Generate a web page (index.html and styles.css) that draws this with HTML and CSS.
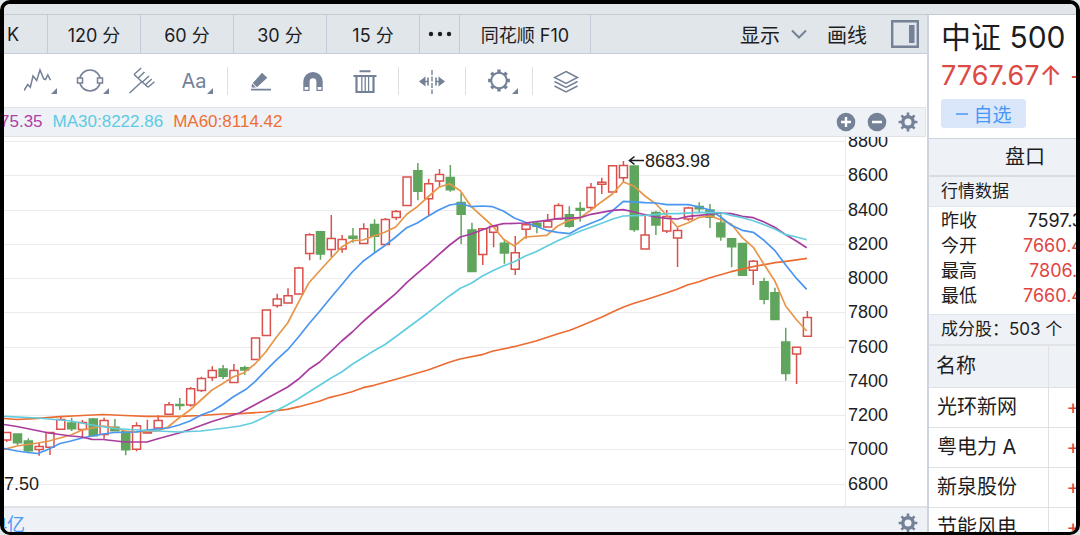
FILE: index.html
```
<!DOCTYPE html>
<html lang="zh-Hans">
<head>
  <meta charset="UTF-8">
  <meta name="viewport" content="width=device-width, initial-scale=1">
  <title>中证 500</title>
  <link rel="stylesheet" href="styles.css">
</head>
<body>

  <!-- 共用图标 -->
  <svg class="symbols" aria-hidden="true">
    <symbol id="gear" viewBox="0 0 20 20">
      <circle cx="10" cy="10" r="5.2" fill="none" stroke="currentColor" stroke-width="3.4"/>
      <path fill="none" stroke="currentColor" stroke-width="2.6" d="M10 .6v4M10 15.4v4M.6 10h4M15.4 10h4M3.4 3.4l2.8 2.8M13.8 13.8l2.8 2.8M3.4 16.6l2.8-2.8M13.8 6.2l2.8-2.8"/>
    </symbol>
  </svg>

  <div class="app">
    <div class="title-strip"></div>

    <div class="layout">
      <main class="main">

        <!-- 周期切换 -->
        <nav class="period-bar">
          <button class="period period-first">K</button>
          <button class="period">120 分</button>
          <button class="period">60 分</button>
          <button class="period">30 分</button>
          <button class="period">15 分</button>
          <button class="period period-more" aria-label="更多">
            <svg width="24" height="6" viewBox="0 0 24 6"><g fill="currentColor"><circle cx="3" cy="3" r="2.2"/><circle cx="12" cy="3" r="2.2"/><circle cx="21" cy="3" r="2.2"/></g></svg>
          </button>
          <button class="period period-wide">同花顺 F10</button>
          <div class="view-options">
            <button class="option">显示
              <svg width="16" height="10" viewBox="0 0 16 10"><path d="M1 1.5L8 8.5L15 1.5" fill="none" stroke="#748197" stroke-width="2"/></svg>
            </button>
            <button class="option">画线</button>
            <button class="option" aria-label="侧栏">
              <svg width="28" height="28" viewBox="0 0 28 28"><path d="M1.2 1.2h25.6v25.6H1.2z" fill="none" stroke="#748197" stroke-width="2.4"/><path d="M18 5h5.5v18H18z" fill="#748197"/></svg>
            </button>
          </div>
        </nav>

        <!-- 画线工具 -->
        <div class="tools">
          <button class="tool has-menu" aria-label="波浪线">
            <svg width="28" height="28" viewBox="0 0 28 28"><path d="M0 23.5L3.7 17.5L6.3 20.3L9 9L12.7 13.5L16 3L19.7 11.8L21.5 12.5L23.8 8L26.5 13.2" fill="none" stroke="currentColor" stroke-width="1.5"/></svg>
          </button>
          <button class="tool has-menu" aria-label="图形">
            <svg width="28" height="28" viewBox="0 0 28 28"><circle cx="14" cy="13.5" r="10.4" fill="none" stroke="currentColor" stroke-width="1.5"/><path d="M1.5 11h5v5h-5zM21.5 11h5v5h-5z" fill="#fff" stroke="currentColor" stroke-width="1.5"/></svg>
          </button>
          <button class="tool" aria-label="叉线">
            <svg width="28" height="28" viewBox="0 0 28 28"><path d="M1.5 26L14 14.5M6 7.5L20 20.3M6 7.5L13.2 1M10 11.2L16.5 5M14.5 15L21 9M17.5 17.8L23.8 12M20 20.3L26.5 14.7" fill="none" stroke="currentColor" stroke-width="1.5"/></svg>
          </button>
          <button class="tool tool-text has-menu">Aa</button>
          <span class="divider"></span>
          <button class="tool" aria-label="画笔">
            <svg width="28" height="28" viewBox="0 0 28 28"><path d="M4 22.6h20" stroke="currentColor" stroke-width="1.6"/><path d="M15 5.8l5.3 4.9L10 20.2L5.8 16z" fill="currentColor"/><path d="M5 16.6l4 4H4.5z" fill="currentColor"/></svg>
          </button>
          <button class="tool" aria-label="磁铁">
            <svg width="28" height="28" viewBox="0 0 28 28"><path d="M4.3 24V14.7a9.7 9.7 0 0 1 19.4 0V24h-6.3v-9.3a3.4 3.4 0 0 0-6.8 0V24z" fill="currentColor"/><path d="M5.6 20h3.7v2.8H5.6zM18.7 20h3.7v2.8h-3.7z" fill="#fff"/></svg>
          </button>
          <button class="tool" aria-label="删除">
            <svg width="28" height="28" viewBox="0 0 28 28"><g fill="none" stroke="currentColor"><path d="M8.5 4.2h11" stroke-width="2"/><path d="M2.5 9h23" stroke-width="2"/><path d="M5.5 9v16h17V9" stroke-width="2.2"/><path d="M10.8 9v15M14.2 9v15M17.6 9v15" stroke-width="1.3"/></g></svg>
          </button>
          <span class="divider"></span>
          <button class="tool" aria-label="区间">
            <svg width="28" height="28" viewBox="0 0 28 28"><path d="M1 14.5l6.5-5v10zM27 14.5l-6.5-5v10z" fill="currentColor"/><path d="M7 14.5h3M18 14.5h3M10 10.5v8M18 10.5v8" stroke="currentColor" stroke-width="1.6"/><path d="M14 3v24" stroke="currentColor" stroke-width="1.4" stroke-dasharray="5 1.5"/></svg>
          </button>
          <span class="divider"></span>
          <button class="tool has-menu" aria-label="设置">
            <svg width="28" height="28" viewBox="0 0 28 28"><circle cx="14" cy="13.5" r="7.8" fill="none" stroke="currentColor" stroke-width="2"/><path d="M14 2.6v3.6M14 20.8v3.6M3.1 13.5h3.6M21.3 13.5h3.6M6.3 5.8l2.5 2.5M19.2 18.7l2.5 2.5M6.3 21.2l2.5-2.5M19.2 8.3l2.5-2.5" stroke="currentColor" stroke-width="3.4"/></svg>
          </button>
          <span class="divider"></span>
          <button class="tool" aria-label="图层">
            <svg width="28" height="28" viewBox="0 0 28 28"><path d="M14 4.5l11.5 6L14 16.5l-11.5-6zM2.5 14.5L14 20.5l11.5-6M2.5 19L14 25l11.5-6" fill="none" stroke="currentColor" stroke-width="1.5"/></svg>
          </button>
        </div>

        <!-- 均线数值 -->
        <div class="indicator-bar">
          <span class="ma20">75.35</span>
          <span class="ma30">MA30:8222.86</span>
          <span class="ma60">MA60:8114.42</span>
          <div class="indicator-actions">
            <button class="icon-button" aria-label="添加">
              <svg width="20" height="20" viewBox="0 0 20 20"><circle cx="10" cy="10" r="9.3" fill="currentColor"/><path d="M5 10h10M10 5v10" stroke="#fff" stroke-width="2.4"/></svg>
            </button>
            <button class="icon-button" aria-label="移除">
              <svg width="20" height="20" viewBox="0 0 20 20"><circle cx="10" cy="10" r="9.3" fill="currentColor"/><path d="M5 10h10" stroke="#fff" stroke-width="2.6"/></svg>
            </button>
            <button class="icon-button" aria-label="指标设置"><svg width="20" height="20"><use href="#gear"/></svg></button>
          </div>
        </div>

        <svg class="chart" id="chart" viewBox="4 137 923 369" role="img" aria-label="中证500 日K线">
          <g id="grid"></g>
          <g id="candles"></g>
          <g id="lines"></g>
          <path d="M644 160.5H630M634.5 156.5L629.5 160.5L634.5 164.5" class="arrow"/>
          <text x="645" y="167">8683.98</text>
          <text x="4" y="490">7.50</text>
        </svg>

        <div class="volume-bar">
          <span class="volume">4亿</span>
          <button class="icon-button" aria-label="成交量设置"><svg width="20" height="20"><use href="#gear"/></svg></button>
        </div>
      </main>

      <!-- 右侧行情 -->
      <aside class="side">
        <header class="stock">
          <h1>中证 500</h1>
          <p class="price">7767.67↑ +</p>
          <button class="favorite"><svg width="14" height="20" viewBox="0 0 14 20"><path d="M1 10h12" stroke="currentColor" stroke-width="1.6"/></svg>自选</button>
        </header>
        <h2 class="side-tab">盘口</h2>
        <h3 class="section-title">行情数据</h3>
        <dl class="quotes">
          <div><dt>昨收</dt><dd>7597.3</dd></div>
          <div class="up"><dt>今开</dt><dd>7660.4</dd></div>
          <div class="up"><dt>最高</dt><dd>7806.1</dd></div>
          <div class="up"><dt>最低</dt><dd>7660.4</dd></div>
        </dl>
        <h3 class="section-title members">成分股：503 个</h3>
        <table class="stocks">
          <thead>
            <tr><th>名称</th><th></th></tr>
          </thead>
          <tbody>
            <tr><td>光环新网</td><td class="up">+</td></tr>
            <tr><td>粤电力 A</td><td class="up">+</td></tr>
            <tr><td>新泉股份</td><td class="up">+</td></tr>
            <tr><td>节能风电</td><td class="up">+</td></tr>
          </tbody>
        </table>
      </aside>
    </div>
  </div>

  <script src="chart.js"></script>
</body>
</html>
```
FILE: styles.css
```
* {
  box-sizing: border-box;
}

body {
  margin: 0;
  background: #e3e8ed;
  color: #1d1d1f;
  font-family: Inter, "Noto Sans CJK SC", sans-serif;
}

h1, h2, h3, p, dl, dd {
  margin: 0;
  font-weight: 400;
}

button {
  padding: 0;
  border: 0;
  background: none;
  color: inherit;
  font: inherit;
  cursor: pointer;
}

svg {
  display: block;
}

.symbols {
  position: absolute;
  width: 0;
  height: 0;
}

.app {
  display: flex;
  flex-direction: column;
  height: 100vh;
  overflow: hidden;
  border: 4px solid #000;
  border-bottom-width: 3px;
  border-radius: 10px;
  background: #fff;
}

.title-strip {
  flex: none;
  height: 11px;
  background: #e1e6eb;
  border-bottom: 1px solid #c3cad3;
}

.layout {
  display: flex;
  flex: 1;
  min-height: 0;
}

.main {
  flex: 1;
  min-width: 0;
  overflow: hidden;
}

/* 周期切换 */
.period-bar {
  display: flex;
  height: 39px;
  background: #e1e6eb;
  border-bottom: 1px solid #c5ccda;
  font-size: 18px;
  white-space: nowrap;
}

.period {
  width: 93px;
  border-right: 1px solid #c3cbd8;
}

.period-first {
  width: 44px;
  padding-left: 3px;
  text-align: left;
}

.period-more {
  display: flex;
  align-items: center;
  justify-content: center;
  width: 40px;
}

.period-wide {
  width: 131px;
}

.view-options {
  display: flex;
  align-items: center;
  gap: 20px;
  margin-left: auto;
  padding-right: 8px;
  font-size: 20px;
}

.option {
  display: flex;
  align-items: center;
  gap: 11px;
}

.option:last-child {
  margin-left: 4px;
}

/* 画线工具 */
.tools {
  display: flex;
  align-items: center;
  height: 53px;
  padding-left: 8px;
  color: #748197;
}

.tool {
  position: relative;
  display: flex;
  align-items: center;
  justify-content: center;
  width: 52px;
  height: 53px;
}

.tool-text {
  font-size: 20px;
}

.has-menu::after {
  content: "";
  position: absolute;
  right: 7px;
  bottom: 13px;
  border-left: 6px solid transparent;
  border-bottom: 6px solid #748197;
}

.divider {
  width: 1px;
  height: 28px;
  margin: 0 7px;
  background: #dcdfe3;
}

/* 均线数值 */
.indicator-bar {
  display: flex;
  align-items: center;
  gap: 10px;
  height: 30px;
  margin-right: 1px;
  background: #eef2f7;
  border: 1px solid #dfe2e6;
  border-left: 0;
  font: 17px "Liberation Sans", Arial, sans-serif;
}

.ma20 {
  margin-left: -4px;
  color: #b03fa5;
}

.ma30 {
  color: #5ccbe2;
}

.ma60 {
  color: #ee6f33;
}

.indicator-actions {
  display: flex;
  gap: 11px;
  margin-left: auto;
  padding-right: 7px;
}

.icon-button {
  color: #748197;
}

/* K线图 */
.chart {
  width: 100%;
  height: auto;
  font: 18px "Liberation Sans", Arial, sans-serif;
  fill: #1d1d1f;
}

.chart .grid-line {
  fill: none;
  stroke: #ebebed;
}

.chart .arrow {
  fill: none;
  stroke: #1d1d1f;
  stroke-width: 1.6;
}

.chart .rise {
  fill: #fff;
  stroke: #d9504c;
  stroke-width: 1.5;
}

.chart .fall {
  fill: #60a55d;
  stroke: #60a55d;
  stroke-width: 1.5;
}

.chart .average {
  fill: none;
  stroke-width: 1.7;
  stroke-linejoin: round;
}

.volume-bar {
  display: flex;
  align-items: center;
  justify-content: space-between;
  height: 32px;
  padding-right: 9px;
  background: #eef2f7;
  border-top: 2px solid #dfe2e6;
  color: #4c9bf5;
  font: 18px "Liberation Sans", "Noto Sans CJK SC", sans-serif;
}

.volume {
  margin-left: -7px;
}

/* 右侧行情 */
.side {
  flex: none;
  width: 149px;
  overflow: hidden;
  border-left: 2px solid #cdd4dd;
  white-space: nowrap;
}

.stock {
  padding: 4px 0 10px 12px;
}

.stock h1 {
  font-size: 30px;
  line-height: 36px;
}

.price {
  margin: 4px 0 6px;
  color: #dc4a45;
  font-size: 27px;
  line-height: 34px;
}

.favorite {
  display: flex;
  align-items: center;
  justify-content: center;
  gap: 4px;
  width: 85px;
  height: 29px;
  border-radius: 3px;
  background: #dae7fa;
  color: #4797f7;
  font-size: 19px;
}

.side-tab {
  height: 39px;
  padding-left: 76px;
  background: #eef2f6;
  border-top: 1px solid #cdd4dd;
  border-bottom: 2px solid #d8dce0;
  font-size: 20px;
  line-height: 36px;
}

.section-title {
  height: 30px;
  padding-left: 12px;
  background: #eef2f6;
  border-bottom: 1px solid #dfe6ee;
  font-size: 17px;
  line-height: 29px;
}

.quotes {
  width: 154px;
  padding: 1px 0 6px 12px;
  font-size: 18px;
  line-height: 25px;
}

.quotes div {
  display: flex;
  justify-content: space-between;
}

.quotes .up dd,
.stocks .up {
  color: #e0443f;
}

.members {
  height: 32px;
  border-top: 1px solid #dfe6ee;
  border-bottom: 2px solid #e1e3e6;
}

.stocks {
  width: 190px;
  border-collapse: collapse;
  table-layout: fixed;
  font-size: 20px;
}

.stocks th,
.stocks td {
  height: 40px;
  padding: 0 0 0 8px;
  border-bottom: 1px solid #dfe1e4;
  border-right: 1px solid #dfe1e4;
  font-weight: 400;
  text-align: left;
  line-height: 30px;
}

.stocks th {
  height: 41px;
  padding-left: 7px;
  background: #eef2f6;
}

.stocks th:first-child {
  width: 119px;
}

.stocks .up {
  padding-left: 18px;
}
```
FILE: chart.js
```
// 每根K线: [涨跌, 影线顶, 实体顶, 实体底, 影线底]
const candles = [
  ['r', 432, 432.5, 440, 442], ['g', 434, 434, 442.7, 445], ['g', 438.3, 441, 450.7, 453], ['r', 442.7, 446.5, 449.5, 455.7],
  ['r', 432.3, 432.5, 447.3, 455], ['r', 416.7, 419.5, 429.3, 429.3], ['g', 417.7, 423, 428.7, 431], ['r', 420, 422.5, 429.5, 437],
  ['g', 418, 419, 435.7, 435.7], ['r', 417.7, 420.5, 434.5, 438.7], ['g', 419, 427.3, 430.7, 430.7], ['g', 431.7, 431.7, 449.7, 455.3],
  ['r', 422.3, 425.7, 449.3, 451.3], ['r', 419.7, 432, 433, 433], ['r', 415.3, 420.5, 428, 428], ['r', 402, 404.7, 414.3, 414.3],
  ['g', 398, 404.5, 405.5, 410], ['r', 387, 388.7, 405, 406.7], ['r', 376.7, 378.5, 390.5, 392], ['r', 366.3, 370.5, 377.5, 381],
  ['g', 365, 369, 376.3, 379], ['r', 364, 370.5, 382.5, 382.5], ['g', 365.7, 367.7, 370, 375], ['r', 337.7, 338, 359.5, 359.5],
  ['r', 309.7, 310, 335.5, 335.5], ['r', 293.7, 299, 305.5, 307.7], ['r', 288.3, 295.7, 303, 303], ['r', 266.7, 268, 294, 294],
  ['r', 233.3, 234.7, 253.5, 260.3], ['g', 231.3, 231.7, 254, 259.7], ['r', 215, 238.5, 249.5, 257], ['r', 235, 239.5, 249, 252.7],
  ['g', 228, 236.3, 238.3, 242.7], ['r', 223.3, 228.7, 243.5, 243.5], ['g', 219.3, 224.5, 236.3, 253.3], ['r', 218, 219.5, 244.5, 244.5],
  ['r', 210, 211.5, 217.5, 220], ['r', 176.5, 177, 205.5, 205.5], ['g', 163, 170.7, 191.3, 200.3], ['r', 178.7, 183.7, 198.7, 215],
  ['r', 169, 174.5, 181, 187.3], ['g', 165, 177.5, 189.7, 191.7], ['g', 193, 202.5, 214.3, 244], ['g', 222.7, 230, 271.5, 271.5],
  ['r', 228, 228.7, 254.5, 265], ['r', 225.7, 226.5, 232.3, 247.3], ['g', 239.7, 243.3, 253, 263.7], ['r', 236, 252.7, 269.3, 275],
  ['r', 222.7, 224.7, 229.3, 238.7], ['g', 221.3, 223.3, 226.3, 233.3], ['r', 214, 221.3, 227, 227], ['r', 203.3, 205.5, 219, 219],
  ['g', 206.3, 214.7, 226.3, 227.7], ['g', 202, 208.5, 210.3, 221.7], ['r', 183, 187.5, 207.5, 209.7], ['r', 177.7, 182.3, 184.3, 194],
  ['r', 165.3, 165.7, 192, 192], ['r', 161, 165.5, 177.7, 181.7], ['g', 165.3, 166, 229.5, 231.7], ['r', 214.3, 235, 249, 249],
  ['g', 211, 212.5, 225, 235], ['r', 210, 216.5, 231, 233], ['r', 227.3, 230.5, 238, 267], ['r', 206.7, 208, 219, 220.7],
  ['g', 202.3, 206.5, 208.7, 212], ['g', 204, 210, 217.3, 228], ['g', 214.3, 223, 236.7, 240.7], ['g', 238.3, 238.7, 246.7, 267.3],
  ['g', 243, 243.5, 275.3, 275.3], ['r', 260, 261.3, 270.3, 285], ['g', 277.7, 281.7, 299.3, 304.3], ['g', 287.7, 292.7, 319.5, 319.5],
  ['g', 327.7, 342, 373.5, 380.7], ['r', 346.7, 347.2, 354, 384], ['r', 311, 317.5, 336.3, 336.3]
];

const averages = {
  '#ec6c32': '4,418.5 17,419.5 38,418.3 60,416.7 82,415.5 103,414.5 125,415.5 147,416.3 179,416.3 201,415.5 222,414 240,413.7 265,412 276,410.7 287,409.3 299,406.7 310,403.7 320,401 330,397.3 340,395 352,391.7 363,387.7 374,385.3 396,379.3 428,370 439,366 450,362 460,359 482,354.7 493,351 514,346.7 536,341 558,333.7 570,330.3 580,326.3 602,317 613,311.7 623,307.3 634,303.3 645,300 667,292.7 677,289.3 688,284.7 699,281.7 710,277.7 731,271.7 753,266.7 775,262.7 786,261.3 807,258.3',
  '#e6974a': '4,449.5 17,446 38,443 49,441 60,438 71,435 82,430 92,428 103,426 114,427.5 125,431 136,432 157,431 168,427 179,418 190,410 201,400 212,390 222,384 233,377 244,372.7 255,364 265.7,352 276.7,336.7 287.7,323 298.3,302.7 309,282.7 319.7,270.7 330.7,258.7 341.7,247 352.3,240.7 363,240 374,236 384.7,232.3 395.7,227 406.7,214.3 417.3,206.7 428,197 438.7,187.3 449.7,183.7 460.3,190.7 471.3,206.7 492.7,226 503.3,239 514.3,246 525.3,237 546.7,235.3 557.7,226 569.3,220.3 580,218 591,210 601.7,201.7 612.7,193.7 623.3,182 634.3,186.3 645,196 656,204 666.7,215.3 677.3,227 688.3,222.7 699.3,217.3 710,216 720.7,219.7 731.3,224 742.3,237.7 753.3,247.3 764,264.3 774.7,280.7 785.7,306 796.7,320 806.7,331',
  '#4b96f0': '4,448.5 17,451 28,452.5 38,453.5 49,449 60,443.5 71,441 82,438 92,436 103,434 114,432.5 136,432 147,430 168,428 179,425 190,421 201,415 212,411 222,405 233,397 246,389.3 255,381.7 265.7,370.7 276.7,359.7 287.7,349.7 298.3,337.3 309,323.7 319.7,311.3 330.7,297.7 341.7,284.7 352.3,272 363,261.3 374,253.3 384.7,245.7 395.7,237 406.7,227.7 417.3,223 428,216.3 438.7,210 449.7,205 460.3,203.3 471.3,206.7 482,206 492.7,206.7 503.3,211 514.3,218 525.3,222.3 546.7,230.3 557.7,232.3 569.3,233.7 580,227.7 591,223.3 601.7,219 612.7,210.7 623.3,201.3 645,202.7 656,203 666.7,204.7 688.3,204.7 699.3,207 710,210 720.7,217 731.3,225.3 742.3,230.3 753.3,232.3 764,240.3 774.7,250.3 785.7,265 796.7,278.7 806.7,289.3',
  '#a93d9f': '4,424.5 17,426.5 49,433 71,436 82,437 92,439.3 103,439.5 125,442 147,442 157,439 179,433 190,429.5 212,421.5 233,415 240,412.7 262,401 287.7,387 298.3,379.3 309,369.3 319.7,362 330.7,351.7 341.7,341 352.3,332 363,321.7 374,312 384.7,303 395.7,293.7 406.7,282.7 417.3,273.3 428,264.3 438.7,254.7 449.7,245 460.3,237 471.3,234 492.7,226 503.3,223.7 525.3,223 546.7,220.3 557.7,218.7 580,217.7 591,214.3 601.7,212.3 612.7,210.3 623.3,209.7 634.3,212 645,214.7 656,217 666.7,218.3 677.3,219 688.3,216.3 699.3,215.3 720.7,213 731.3,213.7 742.3,216.3 753.3,217.7 764,222 774.7,227.3 785.7,234.7 796.7,241.3 806.7,247.7',
  '#62cddf': '4,416.3 38,418 60,420 71,421 92,425 114,428.5 147,430.5 179,432 201,431 222,428.5 240,426 252,423 265,417 276,410.7 287,405 298,399 309,392 319.7,385.3 330.7,378.3 341.7,372 352.3,364.3 374,350.7 384.7,344.7 395.7,336.7 428,312.7 449.7,295.7 460.3,288.3 471.3,283.3 482,276.3 492.7,270.7 503.3,266 514.3,261.7 525.3,256 536,251.7 546.7,246.3 557.7,240.7 569.3,235.7 580,231.3 601.7,223.3 612.7,219 623.3,216 645,215.3 666.7,213.7 677.3,213.7 699.3,212.3 720.7,212.7 731.3,215.3 742.3,217.7 753.3,220.7 764,224.7 774.7,229 785.7,234.7 796.7,237 806.7,239.7'
};

// 网格和价格刻度
function draw_grid() {
  let html = '<path class="grid-line" d="M845.5 137V506"/>';
  for (let i = 0; i <= 10; i++) {
    const y = Math.round(141 + i * 34.25);
    html += `<path class="grid-line" d="M4 ${y + 0.5}H845"/>`;
    html += `<text x="848" y="${y + 6}">${8800 - i * 200}</text>`;
  }
  document.getElementById('grid').innerHTML = html;
}

function draw_candles() {
  let html = '';
  candles.forEach(([type, high, top, bottom, low], i) => {
    const x = 6.7 + i * 10.82;
    const name = type === 'r' ? 'rise' : 'fall';
    html += `<path class="${name}" d="M${x} ${high}V${top}M${x} ${bottom}V${low}M${x - 4} ${top}h8V${bottom}h-8z"/>`;
  });
  document.getElementById('candles').innerHTML = html;
}

function draw_lines() {
  let html = '';
  for (const color in averages) {
    html += `<polyline class="average" stroke="${color}" points="${averages[color]}"/>`;
  }
  document.getElementById('lines').innerHTML = html;
}

draw_grid();
draw_candles();
draw_lines();
```
